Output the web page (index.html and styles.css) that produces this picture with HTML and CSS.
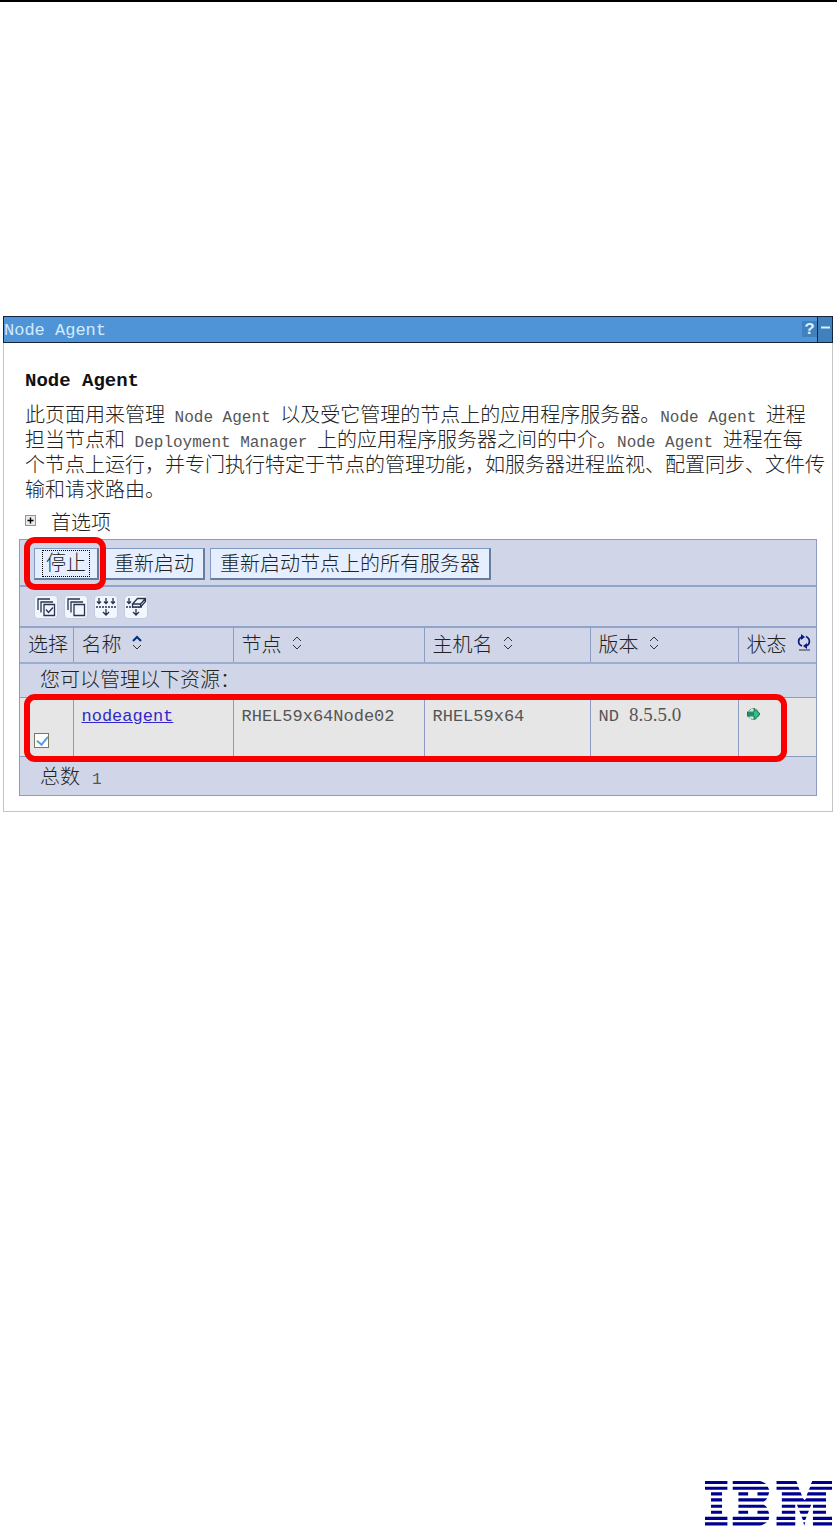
FILE: index.html
```html
<!DOCTYPE html>
<html lang="zh-CN">
<head>
    <meta charset="UTF-8">
    <meta name="viewport" content="width=device-width, initial-scale=1.0">
    <title>Node Agent</title>
    <link rel="stylesheet" href="styles.css">
</head>
<body>
    <main class="panel">
        <div class="titlebar">
            <span class="title">Node Agent</span>
            <button class="title-btn help" aria-label="帮助">?</button>
            <button class="title-btn minimize" aria-label="最小化"><svg width="9" height="3"><path d="M0 1.5h9" stroke="#d8f0ff" stroke-width="2"/></svg></button>
        </div>
        <div class="content">
            <h1>Node Agent</h1>
            <p class="intro">此页面用来管理<span class="en"> Node Agent </span>以及受它管理的节点上的应用程序服务器。<span class="en">Node Agent </span>进程<br>担当节点和<span class="en"> Deployment Manager </span>上的应用程序服务器之间的中介。<span class="en">Node Agent </span>进程在每<br>个节点上运行，并专门执行特定于节点的管理功能，如服务器进程监视、配置同步、文件传<br>输和请求路由。</p>
            <div class="prefs">
                <button class="expand" aria-label="展开"><svg width="11" height="11" viewBox="0 0 11 11"><rect x=".5" y=".5" width="10" height="10" fill="#e6eaea" stroke="#8a9a9a"/><path d="M2.5 5.5h6M5.5 2.5v6" stroke="#000" stroke-width="1.4"/></svg></button>
                <span>首选项</span>
            </div>

            <div class="resources">
                <div class="buttons">
                    <div class="marked">
                        <button class="btn stop"><span>停止</span></button>
                    </div>
                    <button class="btn restart">重新启动</button>
                    <button class="btn restart-all">重新启动节点上的所有服务器</button>
                </div>
                <div class="tools">
                    <button class="tool" aria-label="全选">
                        <svg width="24" height="24" viewBox="0 0 24 24"><path d="M4 15V4h12M7 17.500V7h12"/><path d="M10 9.500h10.500v11H10z" fill="#f2f6ff"/><path d="M12 14.500l2.500 3 4.500-5"/></svg>
                    </button>
                    <button class="tool" aria-label="取消全选">
                        <svg width="24" height="24" viewBox="0 0 24 24"><path d="M4 15V4h12M7 17.500V7h12"/><path d="M10 9.500h10.500v11H10z" fill="#f2f6ff"/></svg>
                    </button>
                    <button class="tool" aria-label="显示过滤器">
                        <svg width="24" height="24" viewBox="0 0 24 24"><path d="M5 3v6M3 6.500l2 2 2-2M12 3v6M10 6.500l2 2 2-2M19 3v6M17 6.500l2 2 2-2M12 14v6M9 17l3 3 3-3"/><path d="M2 12h20" stroke-dasharray="2 1"/></svg>
                    </button>
                    <button class="tool" aria-label="清除过滤器">
                        <svg width="24" height="24" viewBox="0 0 24 24"><path d="M5 3v6M3 6.500l2 2 2-2M12 14v6M9 17l3 3 3-3"/><path d="M2 12h16" stroke-dasharray="2 1"/><path d="M8.500 9l5-5.500h8v3l-5 5.500h-8zM8.500 9h8l5-5.500M16.500 9v3" fill="#f2f6ff"/></svg>
                    </button>
                </div>
                <table>
                    <thead>
                        <tr>
                            <th class="col-select">选择</th>
                            <th class="col-name">名称 <svg class="sort" width="10" height="16" viewBox="0 0 10 16"><path d="M1 6l4-4 4 4" stroke="#003080" stroke-width="2"/><path d="M1 10l4 4 4-4"/></svg></th>
                            <th class="col-node">节点 <svg class="sort" width="10" height="16" viewBox="0 0 10 16"><path d="M1 6l4-4 4 4M1 10l4 4 4-4"/></svg></th>
                            <th class="col-host">主机名 <svg class="sort" width="10" height="16" viewBox="0 0 10 16"><path d="M1 6l4-4 4 4M1 10l4 4 4-4"/></svg></th>
                            <th class="col-version">版本 <svg class="sort" width="10" height="16" viewBox="0 0 10 16"><path d="M1 6l4-4 4 4M1 10l4 4 4-4"/></svg></th>
                            <th class="col-status">状态 <svg class="refresh" width="14" height="17" viewBox="0 0 14 17"><path d="M5 12C0 10 1 4 5 3M9 2.500C14 5 13 11 9 12" fill="none" stroke="#101880" stroke-width="1.700"/><path d="M4 0l4 3-4 3zM10 9v6l-4-3z" fill="#101880"/><path d="M2 16h11" stroke="#333"/></svg></th>
                        </tr>
                    </thead>
                    <tbody>
                        <tr class="message">
                            <td colspan="6">您可以管理以下资源：</td>
                        </tr>
                        <tr class="data">
                            <td class="select"><input type="checkbox" aria-label="选择 nodeagent" checked></td>
                            <td><a href="#">nodeagent</a></td>
                            <td>RHEL59x64Node02</td>
                            <td>RHEL59x64</td>
                            <td>ND <span class="number">8.5.5.0</span></td>
                            <td><svg class="started" width="14" height="14" viewBox="0 0 14 14"><circle cx="6.500" cy="7" r="5.500" fill="#d0f4e4" stroke="#40a080" stroke-dasharray="3 1"/><path d="M0 5h7V1.500L13 7l-6 5.500V9H0z" fill="#30c088" stroke="#185040" stroke-width=".8"/><path d="M0 7h7" stroke="#185040"/></svg></td>
                        </tr>
                    </tbody>
                    <tfoot>
                        <tr>
                            <td colspan="6">总数 <span class="en">1</span></td>
                        </tr>
                    </tfoot>
                </table>
                <div class="row-mark"></div>
            </div>
        </div>
    </main>
    <footer class="footer">
        <svg class="logo" viewBox="45 34 380 134" role="img" aria-label="IBM">
            <g fill="#000090">
                <path d="M45 34h67v9H45zM45 51h67v9H45zM63 67h33v10H63zM63 85h33v10H63zM63 105h33v9H63zM63 123h33v9H63zM45 141h67v9H45zM45 157h67v10H45z"/>
                <path d="M128 34h82q12 3 18 9H128zM128 51h105l4 9H128zM145 67h29v10h-29zM202 67h35l-3 10h-32zM145 85h86q-2 6-10 10h-76zM145 105h76q8 4 10 9h-86zM145 123h29v9h-29zM202 123h32l3 9h-35zM128 141h109l-2 9H128zM128 157h102q-8 7-20 10h-82z"/>
                <path d="M259 34h59l4 9h-63zM259 51h65l4 9h-69zM275 67h56l4 10h-60zM275 85h63l5 6 5-6h59v10H275zM275 105h40v9h-40zM275 123h40v9h-40zM259 141h56v9h-56zM259 157h56v10h-56z"/>
                <path d="M366 34h59v9h-63zM360 51h65v9h-69zM353 67h54v10h-58zM320 105h43l-4 9h-35zM327 123h29l-4 9h-21zM334 141h15l-4 9h-7zM339 157h6l-3 10zM368 105h39v9h-39zM368 123h39v9h-39zM368 141h57v9h-57zM368 157h57v10h-57z"/>
            </g>
        </svg>
    </footer>
</body>
</html>
```
FILE: styles.css
```css
* {
    box-sizing: border-box;
}
body {
    display: flex;
    flex-direction: column;
    min-height: 100vh;
    margin: 0;
    border-top: 2px solid #000;
    background-color: #fff;
    color: #222;
    font-family: "Liberation Mono", "Noto Sans CJK SC", monospace;
    font-size: 20px;
    font-weight: 300;
    line-height: 25px;
}
button {
    padding: 0;
    border: none;
    background: none;
    color: inherit;
    font: inherit;
    cursor: pointer;
}
svg {
    display: block;
}
.en {
    color: #555;
    font-size: 16px;
    line-height: 16px;
    white-space: pre-wrap;
}
.panel {
    margin: 314px 4px 0 3px;
    border: 1px solid #c4c4c4;
    border-top: none;
}
.titlebar {
    display: flex;
    height: 27px;
    margin: 0 -1px;
    border: 1px solid #14243c;
    background-color: #5094d8;
    color: #d0ecff;
    font-size: 17px;
}
.title {
    flex: 1;
    line-height: 28px;
}
.title-btn {
    display: flex;
    align-items: center;
    justify-content: center;
    width: 15px;
    height: 16px;
    margin-top: 4px;
    background-color: #4080bc;
    color: #d8f0ff;
    font-weight: bold;
}
.minimize {
    height: 25px;
    margin: 0;
    padding-bottom: 4px;
    border-left: 1px solid #14243c;
}
.content {
    padding: 26px 15px 15px;
}
h1 {
    margin: 0 0 10px 6px;
    color: #111;
    font-size: 19px;
    line-height: 25px;
}
.intro {
    margin: 0 -15px 0 6px;
}
.prefs {
    display: flex;
    gap: 15px;
    height: 25px;
    margin: 8px 0 2px 6px;
}
.expand {
    height: 11px;
    margin-top: 3px;
}
.resources {
    position: relative;
    border: 1px solid #8c9cc0;
    background-color: #d0d6e7;
}
.buttons {
    display: flex;
    gap: 5px;
    height: 47px;
    padding: 8px 14px;
    border-bottom: 2px solid #93a4ca;
}
.btn {
    height: 32px;
    padding: 3px 9px 0;
    border: 1px solid #8098c4;
    border-right: 2px solid #647da0;
    border-bottom: 2px solid #647da0;
    background-color: #e6efff;
    line-height: 28px;
    white-space: nowrap;
}
.stop {
    padding: 0 7px;
}
.stop span {
    display: block;
    height: 27px;
    padding: 0 3px;
    border: 1px dotted #000;
}
/* red marks drawn over the screen */
.marked {
    position: relative;
}
.marked::after {
    position: absolute;
    inset: -11px -7px -13px -10px;
    border: 6px solid #f80000;
    border-radius: 11px;
    content: "";
    pointer-events: none;
}
.row-mark {
    position: absolute;
    left: 4px;
    right: 29px;
    bottom: 33px;
    height: 68px;
    border: 6px solid #f80000;
    border-radius: 11px;
    pointer-events: none;
}
.tools {
    display: flex;
    gap: 6px;
    height: 41px;
    padding: 8px 14px;
    border-bottom: 2px solid #93a4ca;
}
.tool {
    width: 24px;
    height: 24px;
    border: 1px solid #c3cee0;
    border-radius: 4px;
    background-color: #f2f6ff;
}
.tool svg {
    margin: -1px;
    fill: none;
    stroke: #28344e;
    stroke-width: 1.3;
}
table {
    width: 100%;
    table-layout: fixed;
    border-collapse: collapse;
}
th, td {
    padding: 0 8px;
    border-bottom: 1px solid #8c9cc0;
    text-align: left;
    font-weight: 300;
    white-space: nowrap;
}
th {
    height: 35px;
    padding-top: 3px;
    border-bottom: 2px solid #9aaccf;
}
th + th, td + td {
    border-left: 1px solid #8c9cc0;
}
.col-select {
    width: 53px;
}
.col-name {
    width: 160px;
}
.col-node {
    width: 191px;
}
.col-host {
    width: 166px;
}
.col-version {
    width: 148px;
}
.sort, .refresh {
    display: inline-block;
    margin-left: -2px;
    vertical-align: 1px;
    fill: none;
    stroke: #333;
}
.refresh {
    stroke: none;
}
.message td {
    height: 34px;
    padding-top: 3px;
    padding-left: 20px;
}
.data td {
    height: 59px;
    padding-top: 6px;
    background-color: #e6e6e6;
    color: #555;
    font-size: 17px;
    vertical-align: top;
}
.data .select {
    padding: 0 0 8px 14px;
    line-height: 16px;
    vertical-align: bottom;
}
input {
    display: block;
    width: 15px;
    height: 15px;
    margin: 0;
    border: 1px solid #77775c;
    appearance: none;
    background-color: #fff;
}
input:checked::before {
    display: block;
    width: 5px;
    height: 9px;
    margin: 0 4px;
    border: solid #5b9cdb;
    border-width: 0 2px 2px 0;
    content: "";
    transform: rotate(40deg);
}
a {
    color: #3028cc;
}
.number {
    font-family: "Liberation Serif", serif;
    font-size: 19px;
    line-height: 19px;
}
.started {
    margin-top: 3px;
}
tfoot td {
    height: 39px;
    padding-top: 6px;
    padding-left: 20px;
    border-bottom: none;
}
.footer {
    margin-top: auto;
    padding-right: 5px;
}
.logo {
    width: 127px;
    height: 45px;
    margin-left: auto;
}
```
